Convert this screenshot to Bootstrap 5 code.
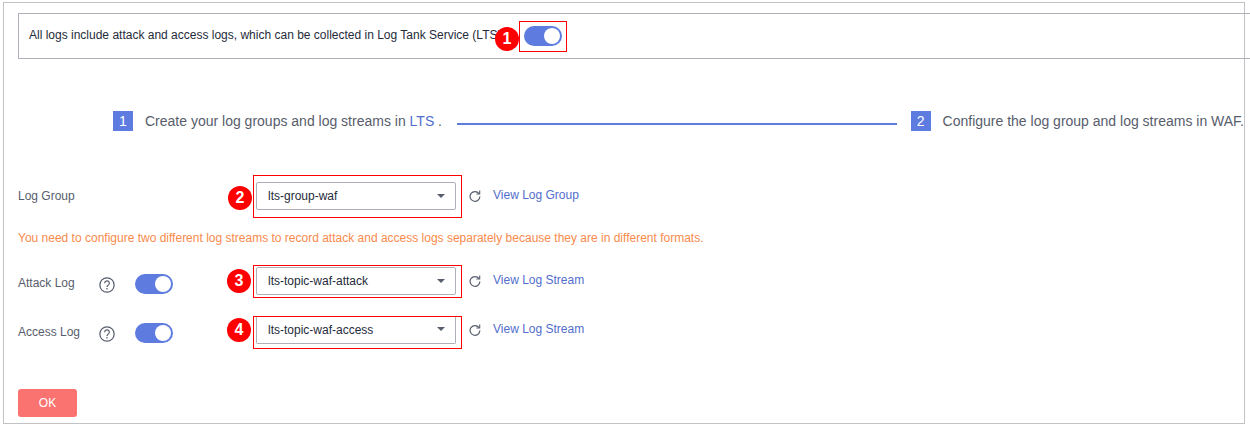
<!DOCTYPE html>
<html lang="en">
<head>
<meta charset="utf-8">
<title>Log settings</title>
<link rel="stylesheet" href="https://cdn.jsdelivr.net/npm/bootstrap@5.3.0/dist/css/bootstrap.min.css">
<style>
html,body{background:#fff;overflow:hidden}
body{font-family:"Liberation Sans",Arial,sans-serif;font-size:12px;color:#252b3a;height:426px}
.frame{margin:2px 0 0 3px;width:1242px;height:422px;border:1px solid #c2c3c7;padding:10px 0 0 14px;box-sizing:border-box}
.banner{width:1240px;height:46px;border:1px solid #adb0b8;padding-left:10px;box-sizing:border-box}
.banner-text{width:490px;white-space:nowrap;margin-top:-2px}
.redbox{border:1px solid #f00;position:relative;box-sizing:border-box}
.topbox{width:48px;height:31px}
.mark-n{position:absolute;width:24px;height:24px;border-radius:50%;background:#f00;color:#fff;font-weight:700;font-size:16px;line-height:24px;text-align:center}
.mark-1{left:-25px;top:5px}
.mark-2{left:-26px;top:10px}
.mark-3{left:-27px;top:3px}
.mark-4{left:-27px;top:1px}
.tog{display:block;width:38px;height:20px;border-radius:10px;background:#5e7ce0;position:relative;flex:none}
.tog::after{content:"";position:absolute;right:2px;top:2px;width:16px;height:16px;border-radius:50%;background:#fff}
.steps{height:20px;margin:52px 0 0 95px;color:#575d6c;font-size:14px;white-space:nowrap}
.sq{width:20px;height:20px;background:#5e7ce0;color:#fff;font-size:14px;line-height:20px;text-align:center;flex:none}
.stepline{width:441px;height:2px;background:#5e7ce0;margin:6px 14px 0 15px}
.stepa{color:#526ecc}
.lab{color:#575d6c;line-height:18px}
.lab-fix{width:63px}
.lab-w{width:235px;flex:none}
.box-w{width:209px;flex:none;padding-left:2px}
.row-one{margin-top:44px;height:43px}
.row-two{margin-top:20px;height:33px}
.row-three{margin-top:18px;height:33px}
.row-one .lab-w{padding-top:12px}
.row-one .box-w{padding-top:6px}
.row-two .lab-w{padding-top:9px}
.row-two .box-w{padding-top:1px}
.row-three .lab-w{padding-top:7px}
.sel{width:200px;height:28px;border:1px solid #adb0b8;border-radius:2px;padding-left:11px;line-height:26px;color:#252b3a;position:relative;box-sizing:border-box}
.sel-flat{height:27px;border-top:0;border-radius:0 0 2px 2px}
.sel::after{content:"";position:absolute;right:10px;top:11px;border-left:4.5px solid transparent;border-right:4.5px solid transparent;border-top:4.5px solid #575d6c}
.sel-flat::after{top:10px}
.tools{height:20px;flex:none}
.row-one .tools{margin-top:11px}
.row-two .tools{margin-top:6px}
.row-three .tools{margin-top:4px}
.lnk{color:#526ecc;text-decoration:none;margin-left:12px;position:relative;top:-1px}
.ref{margin-left:7px;flex:none}
.warn{color:#f98a4b;margin-top:13px;height:14px;line-height:14px}
.okbtn{width:59px;height:28px;margin-top:40px;background:#fb7371;border:0;border-radius:3px;color:#fff;font-size:12px;padding:0;display:block}
.okbtn:hover{background:#fb7371;color:#fff}
.q{margin:3px 20px 0 18px;flex:none}
</style>
</head>
<body>
<div class="frame">
  <div class="banner d-flex align-items-center">
    <div class="banner-text">All logs include attack and access logs, which can be collected in Log Tank Service (LTS).</div>
    <div class="redbox topbox d-flex align-items-center justify-content-center">
      <span class="mark-n mark-1">1</span>
      <span class="tog"></span>
    </div>
  </div>

  <div class="steps d-flex align-items-center">
    <span class="sq">1</span>
    <span class="ms-2 ps-1">Create your log groups and log streams in <span class="stepa">LTS</span> .</span>
    <span class="stepline"></span>
    <span class="sq">2</span>
    <span class="ms-2 ps-1">Configure the log group and log streams in WAF.</span>
  </div>

  <div class="d-flex align-items-start row-one">
    <div class="lab lab-w">Log Group</div>
    <div class="redbox box-w align-self-stretch">
      <span class="mark-n mark-2">2</span>
      <div class="sel">lts-group-waf</div>
    </div>
    <div class="tools d-flex align-items-center">
      <svg class="ref" width="12" height="12" viewBox="0 0 12 12" fill="none" stroke="#575d6c" stroke-width="1.2"><path d="M10 3.6A4.9 4.9 0 1 0 10.9 6.6"/><path d="M10.7 .6v3.4H7.4" stroke-width="1.1"/></svg>
      <a class="lnk" href="#">View Log Group</a>
    </div>
  </div>

  <div class="warn">You need to configure two different log streams to record attack and access logs separately because they are in different formats.</div>

  <div class="d-flex align-items-start row-two">
    <div class="lab-w d-flex align-items-start">
      <span class="lab lab-fix">Attack Log</span>
      <svg class="q" width="16" height="16" viewBox="0 0 17 17" fill="none" stroke="#575d6c" stroke-width="1.3"><circle cx="8.5" cy="8.5" r="7.6"/><path d="M6 6.6a2.5 2.5 0 1 1 3.6 2.2c-.8.4-1.1.8-1.1 1.7"/><path d="M8.5 11.8v1.4"/></svg>
      <span class="tog"></span>
    </div>
    <div class="redbox box-w align-self-stretch">
      <span class="mark-n mark-3">3</span>
      <div class="sel">lts-topic-waf-attack</div>
    </div>
    <div class="tools d-flex align-items-center">
      <svg class="ref" width="12" height="12" viewBox="0 0 12 12" fill="none" stroke="#575d6c" stroke-width="1.2"><path d="M10 3.6A4.9 4.9 0 1 0 10.9 6.6"/><path d="M10.7 .6v3.4H7.4" stroke-width="1.1"/></svg>
      <a class="lnk" href="#">View Log Stream</a>
    </div>
  </div>

  <div class="d-flex align-items-start row-three">
    <div class="lab-w d-flex align-items-start">
      <span class="lab lab-fix">Access Log</span>
      <svg class="q" width="16" height="16" viewBox="0 0 17 17" fill="none" stroke="#575d6c" stroke-width="1.3"><circle cx="8.5" cy="8.5" r="7.6"/><path d="M6 6.6a2.5 2.5 0 1 1 3.6 2.2c-.8.4-1.1.8-1.1 1.7"/><path d="M8.5 11.8v1.4"/></svg>
      <span class="tog"></span>
    </div>
    <div class="redbox box-w align-self-stretch">
      <span class="mark-n mark-4">4</span>
      <div class="sel sel-flat">lts-topic-waf-access</div>
    </div>
    <div class="tools d-flex align-items-center">
      <svg class="ref" width="12" height="12" viewBox="0 0 12 12" fill="none" stroke="#575d6c" stroke-width="1.2"><path d="M10 3.6A4.9 4.9 0 1 0 10.9 6.6"/><path d="M10.7 .6v3.4H7.4" stroke-width="1.1"/></svg>
      <a class="lnk" href="#">View Log Stream</a>
    </div>
  </div>

  <button type="button" class="btn okbtn">OK</button>
</div>
<script src="https://cdn.jsdelivr.net/npm/bootstrap@5.3.0/dist/js/bootstrap.bundle.min.js"></script>
</body>
</html>
